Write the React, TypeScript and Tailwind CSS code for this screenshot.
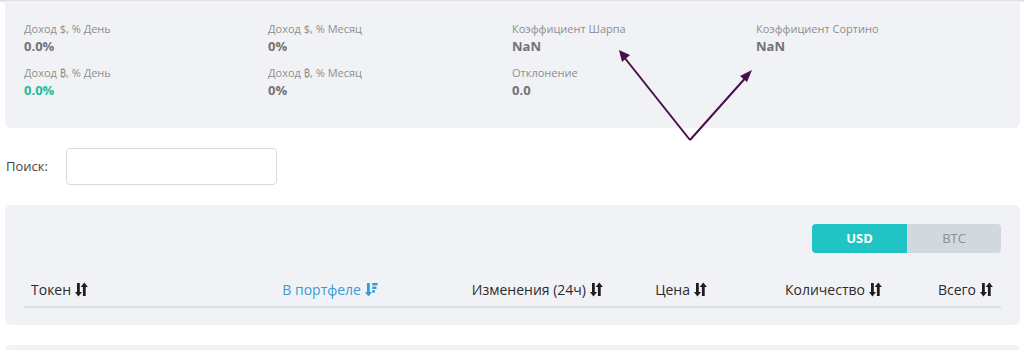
import React from "react";

const stats = [
  [
    { label: "Доход $, % День", value: "0.0%" },
    { label: "Доход ₿, % День", value: "0.0%", green: true },
  ],
  [
    { label: "Доход $, % Месяц", value: "0%" },
    { label: "Доход ₿, % Месяц", value: "0%" },
  ],
  [
    { label: "Коэффициент Шарпа", value: "NaN" },
    { label: "Отклонение", value: "0.0" },
  ],
  [{ label: "Коэффициент Сортино", value: "NaN" }],
];

const columns = [
  { title: "Токен", w: "w-[250px]", align: "text-left pl-[7px]" },
  { title: "В портфеле", w: "w-[112px]", align: "text-right pr-[8px]", active: true },
  { title: "Изменения (24ч)", w: "w-[225px]", align: "text-right pr-[8px]" },
  { title: "Цена", w: "w-[104px]", align: "text-right pr-[8px]" },
  { title: "Количество", w: "w-[175px]", align: "text-right pr-[8px]" },
  { title: "Всего", w: "flex-1", align: "text-right pr-[8px]" },
];

function SortIcon() {
  return (
    <svg width="13" height="15" viewBox="0 0 13 15" className="inline-block ml-[4px] -mt-[4px] align-middle">
      <path d="M2 1h2.8v9H7L3.4 14.5 0 10h2z" fill="#1e1e1e" />
      <path d="M8.2 14h2.8V5h2.2L9.6 0.5 6 5h2.2z" fill="#1e1e1e" transform="translate(-0.3 0)" />
    </svg>
  );
}

function SortActiveIcon() {
  return (
    <svg width="13" height="15" viewBox="0 0 13 15" className="inline-block ml-[4px] -mt-[4px] align-middle">
      <path d="M2 1h2.8v9H7L3.4 14.5 0 10h2z" fill="#3a9ad9" />
      <rect x="7.2" y="1" width="5.4" height="2.4" fill="#3a9ad9" />
      <rect x="7.2" y="4.6" width="4.2" height="2.4" fill="#3a9ad9" />
      <rect x="7.2" y="8.2" width="2.8" height="2.4" fill="#3a9ad9" />
    </svg>
  );
}

export default function App() {
  return (
    <div className="relative w-[1024px] h-[350px] overflow-hidden bg-white" style={{ fontFamily: '"Open Sans", "Noto Sans", sans-serif' }}>
      <div className="h-[3px] bg-gradient-to-b from-[#d9dadd] to-white" />

      <div className="mx-[5px] w-[1015px] bg-[#f1f2f6] rounded-b-[6px] pl-[19px] pt-[17px] pb-[29px] flex">
        {stats.map((col, i) => (
          <div key={i} className="w-[244px] flex flex-col gap-[9px]">
            {col.map((s) => (
              <div key={s.label} className="flex flex-col">
                <span className="text-[11px] leading-[17px] text-[#8e8e8e]">{s.label}</span>
                <span className={`text-[13px] leading-[18px] font-bold ${s.green ? "text-[#1fba98]" : "text-[#737373]"}`}>{s.value}</span>
              </div>
            ))}
          </div>
        ))}
      </div>

      <div className="flex items-center mt-[20px] h-[37px]">
        <span className="pl-[6px] w-[66px] text-[13px] text-[#444]">Поиск:</span>
        <input className="w-[211px] h-[37px] border border-[#d9dcdf] rounded-[4px] bg-white outline-none" />
      </div>

      <div className="mx-[5px] mt-[20px] w-[1015px] h-[120px] bg-[#f1f2f6] rounded-[6px] px-[19px] pt-[19px]">
        <div className="flex justify-end">
          <div className="flex h-[29px] rounded-[4px] overflow-hidden">
            <button className="w-[95px] bg-[#20c4c4] text-white text-[13px] font-bold">USD</button>
            <button className="w-[94px] bg-[#d1d9de] text-[#8a9096] text-[13px]">BTC</button>
          </div>
        </div>
        <div className="flex mt-[26px] h-[29px] border-b-2 border-[#d7e1e5] text-[14px] leading-[22px]">
          {columns.map((c) => (
            <div key={c.title} className={`${c.w} ${c.align} ${c.active ? "text-[#3a9ad9] font-medium" : "text-[#2b2b2b]"}`}>
              {c.title}
              {c.active ? <SortActiveIcon /> : <SortIcon />}
            </div>
          ))}
        </div>
      </div>

      <div className="mx-[5px] mt-[20px] w-[1015px] h-[40px] bg-[#f1f2f6] rounded-[6px]" />

      <svg className="absolute left-0 top-0 pointer-events-none" width="1024" height="350">
        <g stroke="#4b0e4b" strokeWidth="2" fill="none">
          <line x1="690" y1="140" x2="624" y2="57" />
          <line x1="690" y1="140" x2="748" y2="75" />
        </g>
        <polygon points="619,50 630,55 622,62" fill="#4b0e4b" />
        <polygon points="752,70 747,82 740,76" fill="#4b0e4b" />
      </svg>
    </div>
  );
}
